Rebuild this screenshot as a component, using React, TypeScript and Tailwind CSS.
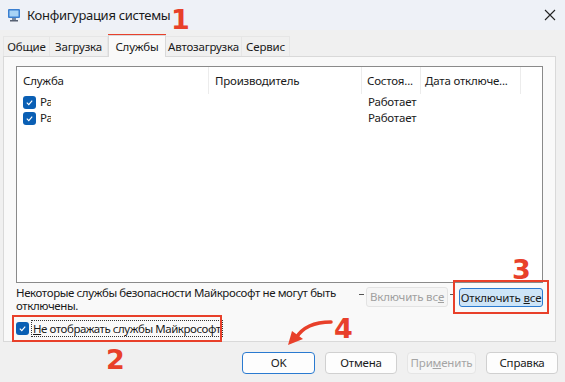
import React from "react";

function Check({ className = "" }: { className?: string }) {
  return (
    <span className={`flex h-[13px] w-[13px] shrink-0 items-center justify-center rounded-[3px] bg-[#0a5fb4] ${className}`}>
      <svg width="9" height="9" viewBox="0 0 10 10">
        <path d="M2 5.2 L4.2 7.3 L8 2.8" fill="none" stroke="#fff" strokeWidth="1.3" />
      </svg>
    </span>
  );
}

function AppIcon() {
  return (
    <svg width="14" height="14" viewBox="0 0 14 14">
      <rect x="1" y="1" width="12" height="9" rx="1" fill="#3b7fd0" />
      <rect x="2.5" y="2.5" width="9" height="6" fill="#a8d3f5" />
      <rect x="5" y="10" width="4" height="2" fill="#7a8aa0" />
      <rect x="3" y="12" width="8" height="1.5" fill="#566173" />
    </svg>
  );
}

const tabs = [
  { label: "Общие", w: "w-[47px]" },
  { label: "Загрузка", w: "w-[58px]" },
  { label: "Службы", w: "w-[58px]", active: true },
  { label: "Автозагрузка", w: "w-[76px]" },
  { label: "Сервис", w: "w-[48px]" },
];

export default function App() {
  return (
    <div className="relative h-[382px] w-[565px] overflow-hidden bg-[#f0f0f0] font-['Noto_Sans',sans-serif] text-[11.5px] leading-none tracking-[-0.2px] text-[#1a1a1a]">
      {/* Title bar */}
      <div className="flex h-[30px] items-center bg-[#eef1f7] pl-[7px]">
        <AppIcon />
        <span className="ml-[6px] text-[13px] tracking-[-0.3px]">Конфигурация системы</span>
        <svg className="ml-auto mr-[9px]" width="12" height="12" viewBox="0 0 12 12">
          <path d="M1 1 L11 11 M11 1 L1 11" stroke="#222" strokeWidth="1.1" />
        </svg>
      </div>

      <div className="px-[3px] pt-[4px]">
        {/* Tabs */}
        <div className="flex h-[22px] items-end">
          {tabs.map((t) =>
            t.active ? (
              <div
                key={t.label}
                className={`${t.w} relative z-10 -mb-px flex h-[22px] items-center justify-center border border-b-0 border-[#d9d9d9] bg-[#f9f9f9]`}
              >
                {t.label}
              </div>
            ) : (
              <div
                key={t.label}
                className={`${t.w} flex h-[20px] items-center justify-center border-r border-t border-[#e6e6e6] first:border-l`}
              >
                {t.label}
              </div>
            )
          )}
        </div>

        {/* Tab pane */}
        <div className="flex h-[286px] w-[553px] flex-col border border-[#d9d9d9] bg-[#f9f9f9] px-[12px] pt-[9px]">
          {/* List */}
          <div className="h-[217px] border border-[#8a8a8a] bg-white">
            <div className="flex h-[27px] items-center">
              <div className="flex h-full w-[192px] items-center border-r border-[#ececec] pl-[6px]">Служба</div>
              <div className="flex h-full w-[153px] items-center border-r border-[#ececec] pl-[6px]">Производитель</div>
              <div className="flex h-full w-[59px] items-center border-r border-[#ececec] pl-[5px]">Состоя...</div>
              <div className="flex h-full w-[100px] items-center border-r border-[#ececec] pl-[4px]">Дата отключе...</div>
            </div>
            {[0, 1].map((i) => (
              <div key={i} className="flex h-[16px] items-center">
                <div className="flex w-[192px] items-center pl-[6px]">
                  <Check />
                  <span className="ml-[4px] w-[11px] overflow-hidden whitespace-nowrap">Ра</span>
                </div>
                <div className="w-[153px]" />
                <div className="pl-[6px]">Работает</div>
              </div>
            ))}
          </div>

          {/* Note + buttons */}
          <div className="mt-[3px] flex h-[30px] items-start">
            <div className="flex-1 whitespace-nowrap leading-[13px] tracking-[-0.4px]">
              Некоторые службы безопасности Майкрософт не могут быть
              <br />
              отключены.
            </div>
            <span className="mt-[8px] h-px w-[5px] bg-[#555]" />
            <div className="ml-[2px] mt-px flex h-[20px] w-[82px] items-center justify-center rounded-[3px] border border-[#e3e3e3] bg-[#f5f5f5] text-[#a0a0a0]">
              Включить вс<span className="underline">е</span>
            </div>
            <span className="ml-[2px] mt-[8px] h-px w-[5px] bg-[#555]" />
            <div className="ml-[4px] mt-[2px] flex h-[19px] w-[84px] items-center justify-center rounded-[3px] border border-[#2a7ad0] bg-[#cde4f7]">
              Отключить <span className="ml-[3px] underline">в</span>се
            </div>
          </div>

          {/* Checkbox */}
          <div className="mt-[4px] flex items-center">
            <Check />
            <span className="ml-[2px] flex h-[17px] items-center border border-dotted border-[#333] px-px tracking-[-0.45px]">
              <span className="underline">Н</span>е отображать службы Майкрософт
            </span>
          </div>
        </div>
      </div>

      {/* Bottom buttons */}
      <div className="mt-[10px] flex h-[22px] justify-end gap-[10px] pr-[7px]">
        <div className="flex w-[73px] items-center justify-center rounded-[4px] border border-[#2a7ad0] bg-[#fdfdfd]">OK</div>
        <div className="flex w-[72px] items-center justify-center rounded-[4px] border border-[#d0d0d0] bg-[#fdfdfd]">Отмена</div>
        <div className="flex w-[69px] items-center justify-center rounded-[4px] border border-[#e5e5e5] bg-[#f6f6f6] text-[#a5a5a5]">
          При<span className="underline">м</span>енить
        </div>
        <div className="flex w-[72px] items-center justify-center rounded-[4px] border border-[#d0d0d0] bg-[#fdfdfd]">Справка</div>
      </div>

      {/* Annotations */}
      <div className="absolute left-[108px] top-[34px] h-[23px] w-[58px] border-2 border-[#e8402a]" />
      <div className="absolute left-[12px] top-[315px] h-[27px] w-[210px] border-2 border-[#e8402a]" />
      <div className="absolute left-[453px] top-[280px] h-[34px] w-[96px] border-2 border-[#e8402a]" />
      <span className="absolute left-[171px] top-[6px] font-['DejaVu_Sans',sans-serif] text-[27px] font-bold leading-none text-[#e8402a]">1</span>
      <span className="absolute left-[106px] top-[346px] font-['DejaVu_Sans',sans-serif] text-[27px] font-bold leading-none text-[#e8402a]">2</span>
      <span className="absolute left-[512px] top-[256px] font-['DejaVu_Sans',sans-serif] text-[27px] font-bold leading-none text-[#e8402a]">3</span>
      <span className="absolute left-[334px] top-[315px] font-['DejaVu_Sans',sans-serif] text-[27px] font-bold leading-none text-[#e8402a]">4</span>
      <svg className="absolute left-[284px] top-[318px]" width="50" height="30" viewBox="0 0 50 30">
        <path d="M47 4 C 30 4, 18 10, 12 20" fill="none" stroke="#e8402a" strokeWidth="3.5" strokeLinecap="round" />
        <path d="M4 27 L 8 13 L 19 21 Z" fill="#e8402a" />
      </svg>
    </div>
  );
}
